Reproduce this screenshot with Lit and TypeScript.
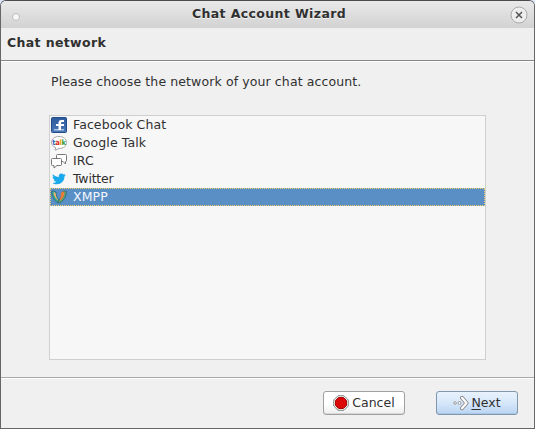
import { LitElement, html, svg, css } from "lit";
import { customElement, state } from "lit/decorators.js";
import { classMap } from "lit/directives/class-map.js";

const icons: Record<string, unknown> = {
  facebook: svg`<defs><linearGradient id="fb" x2="0" y2="1"><stop stop-color="#2c5a9c"/><stop offset="1" stop-color="#4a7ab8"/></linearGradient></defs>
    <rect x=".5" y=".5" width="15" height="15" rx="1" fill="url(#fb)" stroke="#214b89"/>
    <rect x="3" y="12" width="10" height="1.500" fill="#a9c3e4"/>
    <path d="M7.500 13V9H5V7h2.500V5.800Q7.500 3 10.300 3H13v2h-1.800Q10 5 10 6v1h3v2h-3v4z" fill="#fff"/>`,
  talk: svg`<path d="M4.500 12.500 4.200 15.200 8 13.500C12.500 13.500 15.500 11.200 15.500 7.500S12.200 1.500 8 1.500.5 3.800.5 7.500c0 2.200 1.500 4.100 4 5z" fill="#fff" stroke="#a8a6a6"/>
    <g class="wordmark"><text x="1.300" y="10" fill="#2463c7">t</text><text x="4.200" y="10" fill="#e0281d">a</text><text x="8.500" y="10" fill="#eaa400">l</text><text x="10.500" y="10" fill="#2d9a35">k</text></g>`,
  irc: svg`<path d="M6.500 1.500h8q1 0 1 1v5q0 1-1 1v2.500l-2.500-2.500H6.500q-1 0-1-1v-5q0-1 1-1z" fill="#fff" stroke="#777"/>
    <path d="M1.500 5.500h8q1 0 1 1v5q0 1-1 1H6L3 15v-2.500H1.500q-1 0-1-1v-5q0-1 1-1z" fill="#fff" stroke="#777"/>`,
  twitter: svg`<g transform="translate(.5 .5) scale(.91)"><path d="M1.500 3Q4 6 8 6.200 7.500 2.500 10.800 2.200 12.300 2.200 13.200 3.200L15.200 2.500 14 4.200 15.800 3.800 14.200 5.500C14.200 10.500 10.500 14 6 14 3.800 14 2 13.500 1 12.600 3.200 12.700 4.500 12 5.300 11.400 3.500 11.200 2.700 10.200 2.400 9.200H3.700C2 8.600 1.200 7.400 1.200 5.900L2.500 6.300Q.5 4.800 1.500 3z" fill="#1aa9ed"/></g>`,
  xmpp: svg`<path d="M.5 2.500Q2.500 1.500 5 3C5 7 6.500 10 9 12.500L7 14C3 11.500.8 7.500.5 2.500z" fill="#35a596" stroke="#286078" stroke-width=".7"/>
    <path d="M2.500 3.300Q3.600 3 4.600 4 4.800 8.500 7.500 12 3 9 2.500 3.300z" fill="#e9b46a"/>
    <path d="M15.500 2.500Q13.500 1.500 11 3C11 7 9 10.500 6.500 13L9 14C13 11.500 15.200 7.500 15.500 2.500z" fill="#57a56a" stroke="#286078" stroke-width=".7"/>
    <path d="M13.300 2.300Q11 2.500 9.800 4.200C10.200 7.500 9.500 9.500 8 12.300 12 10 13.500 7 13.300 2.300z" fill="#ec7a38"/>`,
};

@customElement("app-root")
export class ChatWizard extends LitElement {
  @state() private selected = "XMPP";

  private networks = [
    { name: "Facebook Chat", icon: "facebook" },
    { name: "Google Talk", icon: "talk" },
    { name: "IRC", icon: "irc" },
    { name: "Twitter", icon: "twitter" },
    { name: "XMPP", icon: "xmpp" },
  ];

  static styles = css`
    :host { display: block; height: 429px; background: #dce8f7; font: 12.500px/18px "DejaVu Sans", sans-serif; color: #303030; cursor: default; }
    * { box-sizing: border-box; }
    .window { height: 429px; display: flex; flex-direction: column; border: 1px solid #666; border-top-color: #4b4a4c; border-radius: 6px 6px 0 0; background: #f0f0f0; overflow: hidden; }
    .titlebar { height: 27px; flex: none; display: grid; grid-template-columns: 30px 1fr 26px; align-items: center; background: linear-gradient(#e9e9e9, #d2d2d2); font-weight: bold; letter-spacing: .38px; text-align: center; text-shadow: 0 1px #f3f3f3; }
    .title { padding: 0 1px 2px 0; }
    .dot { width: 8px; height: 8px; margin: 5px 0 0 11px; border: 1px solid #bdbdbd; border-radius: 50%; background: #f7f7f7; }
    .close { display: block; width: 18px; height: 18px; margin: 0 0 0 2px; }
    .heading { height: 33px; flex: none; padding: 6px 6px; border-bottom: 1px solid #868686; background: #efefef; font-weight: bold; letter-spacing: .36px; }
    .page { height: 316px; flex: none; padding: 11px 48px 0; border-top: 1px solid #fff; }
    .prompt { margin: 0 0 0 2px; height: 42px; white-space: nowrap; letter-spacing: .11px; }
    .list { width: 437px; height: 245px; border: 1px solid #cfcfcf; background: #f7f7f7; }
    .row { height: 18px; display: flex; align-items: center; gap: 6px; padding-left: 1px; letter-spacing: .1px; }
    .row.twitter { letter-spacing: -.2px; }
    .row svg { width: 16px; height: 16px; flex: none; }
    .row.selected { background: #5a8fc5; color: #f4f7fb; outline: 1px dotted #f4cf68; outline-offset: -1px; }
    .wordmark { font: bold 7.500px "DejaVu Sans Condensed", "DejaVu Sans", sans-serif; letter-spacing: 0; }
    .footer { flex: 1; display: flex; align-items: flex-start; justify-content: flex-end; gap: 31px; padding: 12px 16px 0 0; border-top: 1px solid #aaa; box-shadow: inset 0 1px #fff; }
    .button { width: 82px; height: 24px; margin: 1px 0 0; display: flex; align-items: center; justify-content: center; gap: 3px; border: 1px solid #a0a0a0; border-radius: 3px; background: linear-gradient(#fff, #fff 55%, #ededed); box-shadow: inset 0 -1px #d7d7d7; padding: 0; font: inherit; color: inherit; letter-spacing: 0; }
    .button svg { width: 16px; height: 16px; flex: none; }
    .primary { gap: 2px; border-color: #8296ac; background: linear-gradient(#e9f2fd, #d6e7fa 50%, #b9d4f2); box-shadow: inset 0 -1px #a9c7e8; }
    u { text-underline-offset: 2px; text-decoration-thickness: 1px; }
  `;

  render() {
    return html`<div class="window">
      <div class="titlebar"><span class="dot"></span><span class="title">Chat Account Wizard</span>
        <svg class="close" viewBox="0 0 18 18"><circle cx="9" cy="9" r="8" fill="#eee" stroke="#aaa"/><path d="m6 6 6 6m0-6-6 6" stroke="#555" stroke-width="1.500"/></svg>
      </div>
      <div class="heading">Chat network</div>
      <div class="page">
        <p class="prompt">Please choose the network of your chat account.</p>
        <div class="list">
          ${this.networks.map((n) => html`<div class=${classMap({ row: true, [n.icon]: true, selected: n.name === this.selected })} @click=${() => (this.selected = n.name)}>
            <svg viewBox="0 0 16 16">${icons[n.icon]}</svg><span>${n.name}</span></div>`)}
        </div>
      </div>
      <div class="footer">
        <button class="button"><svg viewBox="0 0 16 16"><path d="M5 .7h6L15.300 5v6L11 15.300H5L.7 11V5z" fill="#eee" stroke="#888"/><path d="M5.600 2.500h4.800l3.100 3.100v4.800l-3.100 3.100H5.600l-3.100-3.100V5.600z" fill="#dc0808" stroke="#a40000"/></svg><span>Cancel</span></button>
        <button class="button primary"><svg viewBox="0 0 16 16"><path d="m9 2.800 4.500 5.200L9 13.200" fill="none" stroke="#888" stroke-width="4" stroke-linecap="round" stroke-linejoin="round"/><path d="m9 2.800 4.500 5.200L9 13.200" fill="none" stroke="#fff" stroke-width="2.200" stroke-linecap="round" stroke-linejoin="round"/><g fill="#fff" stroke="#888" stroke-width=".8"><circle cx="2" cy="8" r="1.300"/><circle cx="6.500" cy="8" r="1.500"/></g></svg><span><u>N</u>ext</span></button>
      </div>
    </div>`;
  }
}
